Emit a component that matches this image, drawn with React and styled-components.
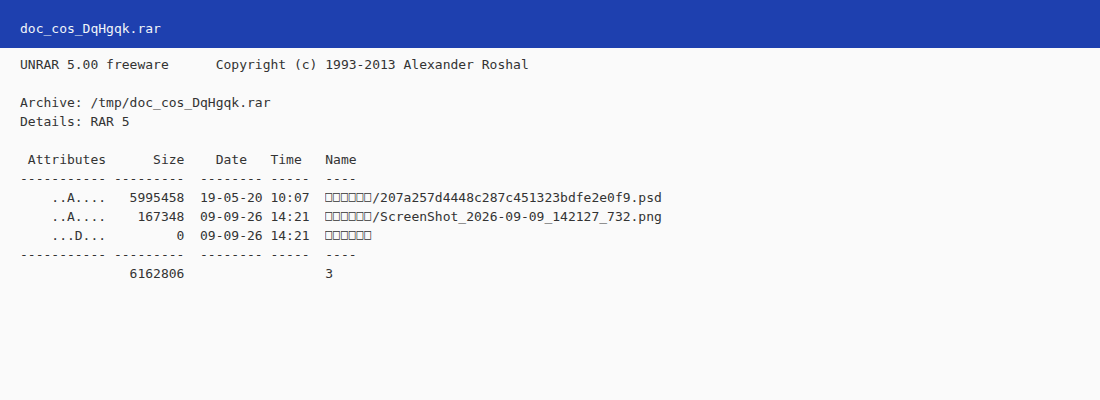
import React from 'react';
import styled, { createGlobalStyle } from 'styled-components';

const GlobalStyle = createGlobalStyle`
  html, body {
    margin: 0;
    padding: 0;
    background: #fafafa;
  }
`

const Page = styled.div`
  width: 1100px;
  height: 400px;
  display: flex;
  flex-direction: column;
  background: #fafafa;
  font-family: "DejaVu Sans Mono", "Liberation Mono", monospace;
  font-size: 13px;
`

const TitleBar = styled.header`
  flex: 0 0 48px;
  box-sizing: border-box;
  background-color: #1e40af;
  color: #f1f5f9;
  padding: 19px 20px 0;
  line-height: 19px;
`

const Output = styled.pre`
  margin: 0;
  padding: 7px 20px;
  font: inherit;
  line-height: 19px;
  color: #333;
  white-space: pre;
`

// folder name came through mangled, shows as missing-glyph boxes
const Mangled = styled.span`
  display: inline-block;
  width: 47px;
  overflow: hidden;
  vertical-align: bottom;
  font-size: 11px;
  letter-spacing: 1.2px;
  transform: scaleY(1.3);
  transform-origin: 50% 62%;
`

const folder = <Mangled>□□□□□□</Mangled>

const App = () => {
  return (
    <Page>
      <GlobalStyle />
      <TitleBar>doc_cos_DqHgqk.rar</TitleBar>
      <Output>
{`UNRAR 5.00 freeware      Copyright (c) 1993-2013 Alexander Roshal

Archive: /tmp/doc_cos_DqHgqk.rar
Details: RAR 5

 Attributes      Size    Date   Time   Name
----------- ---------  -------- -----  ----
    ..A....   5995458  19-05-20 10:07  `}{folder}{`/207a257d4448c287c451323bdfe2e0f9.psd
    ..A....    167348  09-09-26 14:21  `}{folder}{`/ScreenShot_2026-09-09_142127_732.png
    ...D...         0  09-09-26 14:21  `}{folder}{`
----------- ---------  -------- -----  ----
              6162806                  3`}
      </Output>
    </Page>
  );
}

export default App;
